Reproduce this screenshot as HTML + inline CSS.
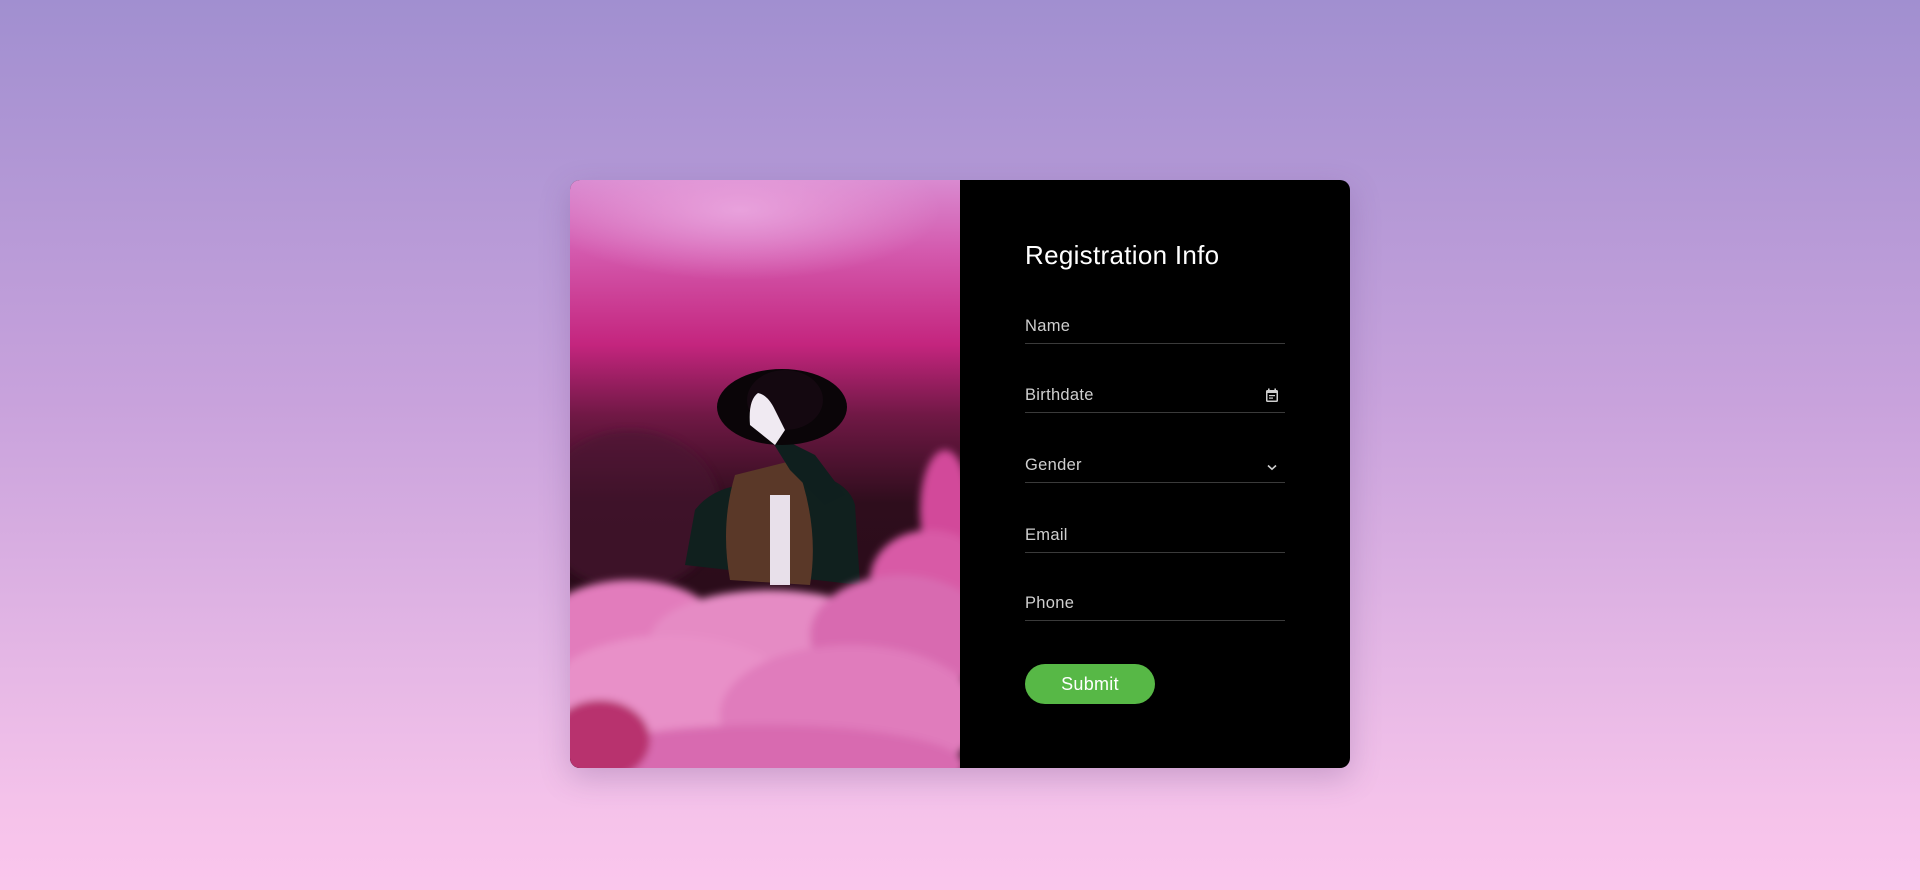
<!DOCTYPE html>
<html><head><meta charset="utf-8"><style>
html,body{margin:0;padding:0;width:1920px;height:890px;overflow:hidden}
body{background:linear-gradient(180deg,#a18fd0 0%,#c8a2dc 45%,#f4c2ea 90%,#fbc6ec 100%);font-family:"Liberation Sans",sans-serif;position:relative}
.card{position:absolute;left:570px;top:180px;width:780px;height:588px;border-radius:10px;overflow:hidden;background:#000;box-shadow:0 10px 30px rgba(90,60,120,.25);display:flex}
.img{width:390px;height:588px;position:relative}
.form{position:absolute;left:455px;top:0;width:260px}
h1{position:absolute;top:60px;left:0;margin:0;font-weight:normal;color:#fff;font-size:26px;letter-spacing:.3px;white-space:nowrap}
.f{position:absolute;left:0;width:260px;height:30px;border-bottom:1px solid #3a3a3a;color:#cfcfcf;font-size:16.5px;letter-spacing:.3px}
.f span{position:absolute;left:0;bottom:7px}
.btn{position:absolute;left:0;top:484px;width:130px;height:40px;border-radius:20px;background:#57b846;color:#fff;font-size:18px;text-align:center;line-height:40px;letter-spacing:.3px}
</style></head><body>
<div class="card">
<div class="img">
<svg width="390" height="588" viewBox="0 0 390 588">
<defs>
<linearGradient id="bg" x1="0" y1="0" x2="0" y2="1"><stop offset="0" stop-color="#d98ad0"/><stop offset=".12" stop-color="#d45aae"/><stop offset=".28" stop-color="#c4257e"/><stop offset=".4" stop-color="#701845"/><stop offset=".55" stop-color="#2e0d1c"/><stop offset="1" stop-color="#240a16"/></linearGradient>
<radialGradient id="hl" cx=".5" cy=".5" r=".5"><stop offset="0" stop-color="#eaa6df" stop-opacity=".9"/><stop offset="1" stop-color="#eaa6df" stop-opacity="0"/></radialGradient>
<filter id="bl2"><feGaussianBlur stdDeviation="4"/></filter>
</defs>
<rect width="390" height="588" fill="url(#bg)"/>
<ellipse cx="170" cy="30" rx="200" ry="70" fill="url(#hl)"/>
<ellipse cx="60" cy="330" rx="90" ry="80" fill="#4a1530" opacity=".6" filter="url(#bl2)"/>
<g transform="translate(0,25)">
<path d="M115 360 L125 305 Q140 285 170 280 L250 270 Q280 280 285 300 L290 380 Z" fill="#10201e"/>
<path d="M165 270 Q150 320 160 375 L240 380 Q250 320 225 255 Z" fill="#5a3828"/>
<rect x="200" y="290" width="20" height="90" fill="#e8e0ea"/>
<path d="M195 225 L245 250 L275 290 L255 300 L220 265 Z" fill="#0f1f1e"/>
<ellipse cx="212" cy="202" rx="65" ry="38" fill="#0a0508"/>
<ellipse cx="215" cy="195" rx="38" ry="30" fill="#140810"/>
<path d="M180 220 Q178 195 188 188 Q198 190 205 205 L215 225 L205 240 Z" fill="#f0eaf2"/>
</g>
<g filter="url(#bl2)">
<ellipse cx="375" cy="330" rx="25" ry="60" fill="#d24a9a"/>
<ellipse cx="360" cy="400" rx="60" ry="50" fill="#d85aa6"/>
<ellipse cx="60" cy="450" rx="90" ry="50" fill="#e27cbc"/>
<ellipse cx="200" cy="460" rx="120" ry="50" fill="#e58bc4"/>
<ellipse cx="330" cy="455" rx="90" ry="60" fill="#d86bb0"/>
<ellipse cx="100" cy="525" rx="130" ry="70" fill="#e890c8"/>
<ellipse cx="280" cy="535" rx="130" ry="70" fill="#e07cbc"/>
<ellipse cx="195" cy="585" rx="200" ry="40" fill="#d86ab0"/>
<ellipse cx="30" cy="560" rx="50" ry="40" fill="#b8306e"/>
</g>
</svg>
</div>
<div class="form">
<h1>Registration Info</h1>
<div class="f" style="top:133px"><span>Name</span></div>
<div class="f" style="top:202px"><span>Birthdate</span>
<svg style="position:absolute;right:6px;bottom:9px" width="14" height="15" viewBox="0 0 14 15"><rect x="1" y="2" width="12" height="12" rx="1.5" fill="#cfcfcf"/><rect x="3" y="0.5" width="1.6" height="3" fill="#cfcfcf"/><rect x="9.4" y="0.5" width="1.6" height="3" fill="#cfcfcf"/><rect x="2.5" y="5" width="9" height="7.5" fill="#000"/><rect x="4" y="7" width="6" height="1.2" fill="#cfcfcf"/><rect x="4" y="9.5" width="4" height="1.2" fill="#cfcfcf"/></svg></div>
<div class="f" style="top:272px"><span>Gender</span>
<svg style="position:absolute;right:8px;bottom:11px" width="10" height="7" viewBox="0 0 10 7"><path d="M1 1.5 L5 5.2 L9 1.5" stroke="#cfcfcf" stroke-width="1.6" fill="none"/></svg></div>
<div class="f" style="top:342px"><span>Email</span></div>
<div class="f" style="top:410px"><span>Phone</span></div>
<div class="btn">Submit</div>
</div>
</div>
</body></html>
